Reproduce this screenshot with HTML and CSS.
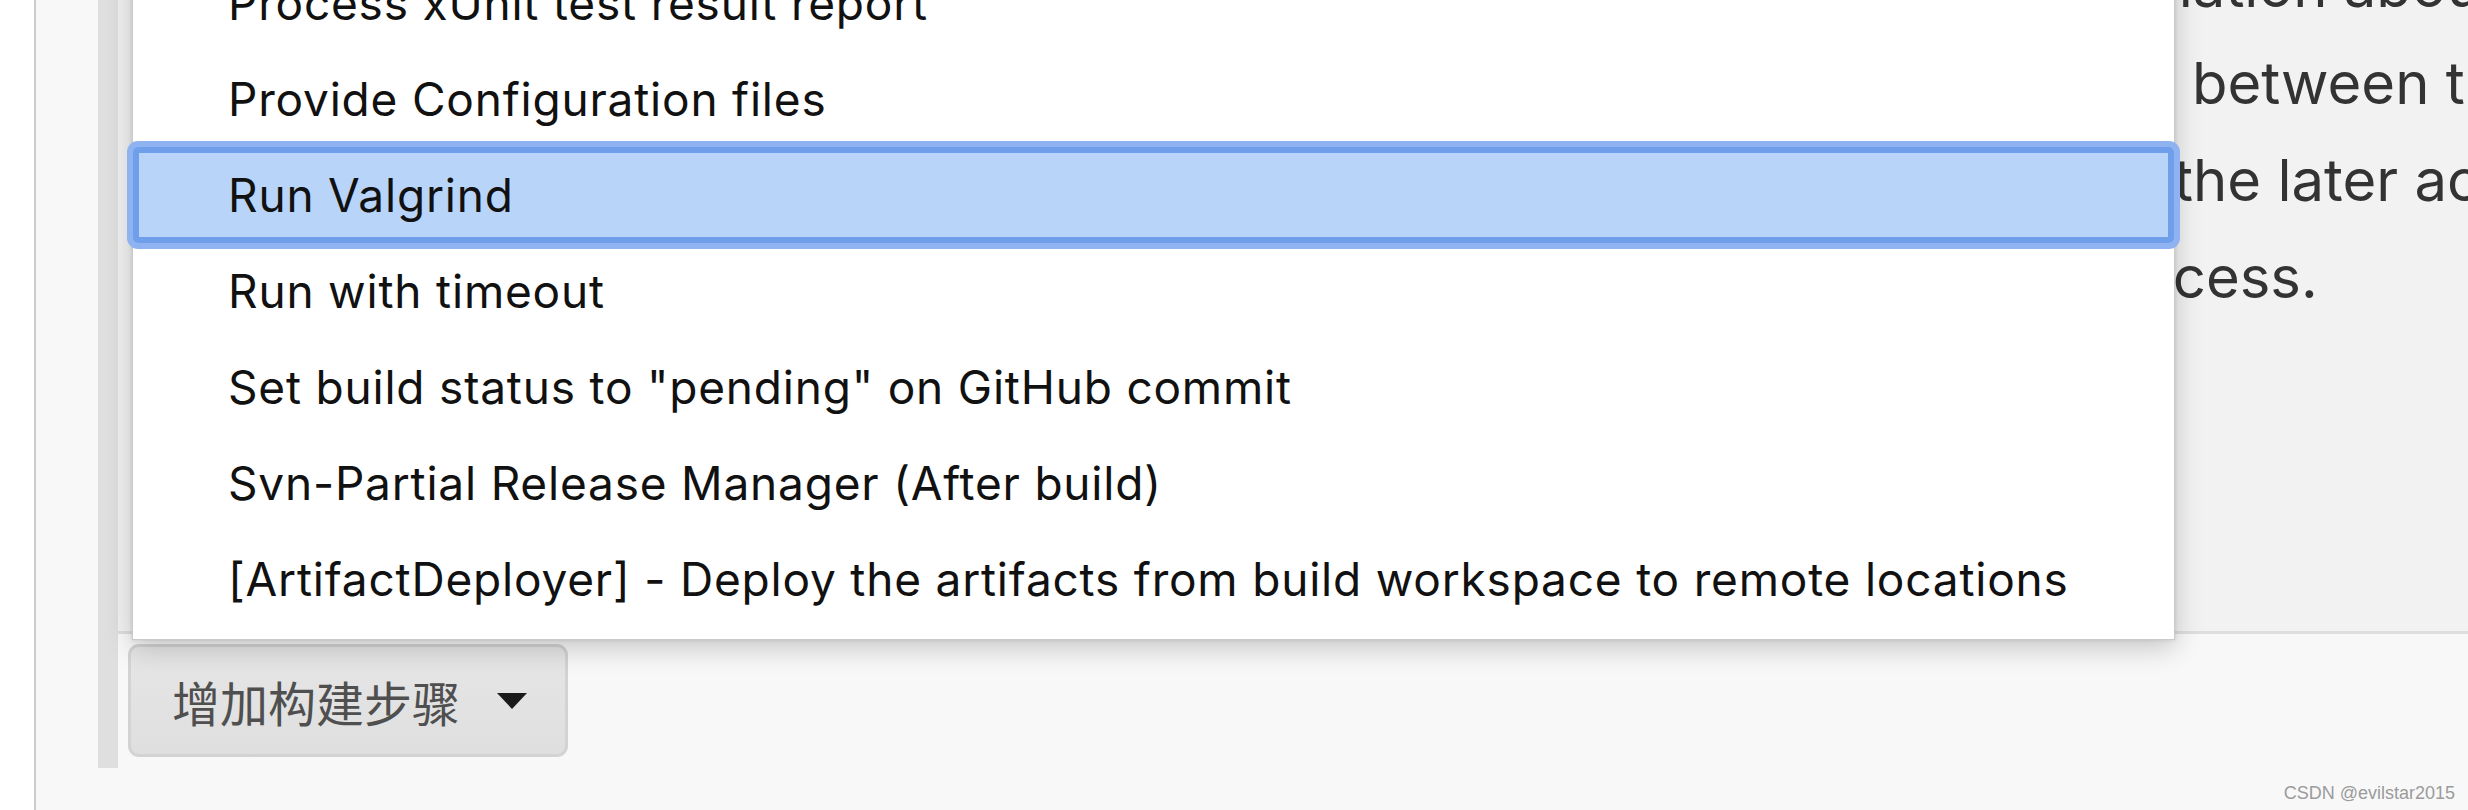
FILE: index.html
```html
<!DOCTYPE html>
<html lang="zh-CN">
<head>
<meta charset="utf-8">
<title>Build steps</title>
<link rel="stylesheet" href="styles.css">
</head>
<body>
<div class="page">
  <div class="section">
    <div class="help">
      <div class="help-text">
        <div class="hl l1">mation about the</div>
        <div class="hl l2">s between the</div>
        <div class="hl l3">the later actions</div>
        <div class="hl l4">ocess.</div>
      </div>
    </div>
    <div class="actions">
      <button class="add-btn" type="button">增加构建步骤<span class="caret"></span></button>
    </div>
    <ul class="menu">
      <li class="item">Process xUnit test result report</li>
      <li class="item">Provide Configuration files</li>
      <li class="item active">Run Valgrind</li>
      <li class="item">Run with timeout</li>
      <li class="item">Set build status to "pending" on GitHub commit</li>
      <li class="item">Svn-Partial Release Manager (After build)</li>
      <li class="item">[ArtifactDeployer] - Deploy the artifacts from build workspace to remote locations</li>
    </ul>
  </div>
</div>
<div class="watermark">CSDN @evilstar2015</div>
</body>
</html>
```

FILE: styles.css
```css
* { box-sizing: border-box; }
html, body {
  margin: 0;
  height: 810px;
  overflow: hidden;
  background: #ffffff;
  font-family: Inter, "Noto Sans", sans-serif;
}
.page {
  margin-left: 34px;
  height: 810px;
  border-left: 2px solid #cbcbcb;
  background: #f8f8f8;
  padding-left: 62px;
}
.section {
  position: relative;
  height: 768px;
  border-left: 20px solid #dfdfdf;
}
.help {
  height: 634px;
  background: #f2f2f2;
  border-bottom: 3px solid #dedede;
  overflow: hidden;
}
.help-text {
  margin-top: -62px;
  font-size: 58px;
  line-height: 97px;
  color: #333333;
  white-space: nowrap;
}
.l1 { padding-left: 2024px; }
.l2 { padding-left: 2027px; }
.l3 { padding-left: 2056px; }
.l4 { padding-left: 2020px; }
.actions {
  padding: 10px 0 0 10px;
}
.add-btn {
  display: flex;
  align-items: center;
  width: 440px;
  height: 113px;
  padding: 0 0 0 41px;
  border: 3px solid #d3d3d3;
  border-radius: 11px;
  background: linear-gradient(#e6e6e6, #dfdfdf);
  color: #4f4f4f;
  font-family: "Noto Sans CJK SC", sans-serif;
  font-size: 48px;
  cursor: pointer;
}
.caret {
  width: 0;
  height: 0;
  margin-left: 37px;
  border-left: 15px solid transparent;
  border-right: 15px solid transparent;
  border-top: 16px solid #1a1a1a;
}
.menu {
  position: absolute;
  top: -58px;
  left: 14px;
  width: 2043px;
  margin: 0;
  padding: 12px 0;
  list-style: none;
  background: #ffffff;
  border: 1px solid #cacaca;
  box-shadow: 0 8px 26px rgba(0, 0, 0, 0.2), 0 0 4px rgba(0, 0, 0, 0.12);
  font-size: 46px;
  letter-spacing: 0.8px;
  color: #111111;
}
.item {
  height: 96px;
  line-height: 96px;
  padding-left: 95px;
  white-space: nowrap;
}
.item.active {
  background: #b8d4f9;
  border-radius: 5px;
  box-shadow: inset 0 0 0 6px #6f9eeb, 0 0 0 6px #8fb3f1;
}
.watermark {
  position: absolute;
  right: 13px;
  bottom: 6px;
  font-family: "Liberation Sans", Arial, sans-serif;
  font-size: 18px;
  color: #9b9b9b;
}
```
